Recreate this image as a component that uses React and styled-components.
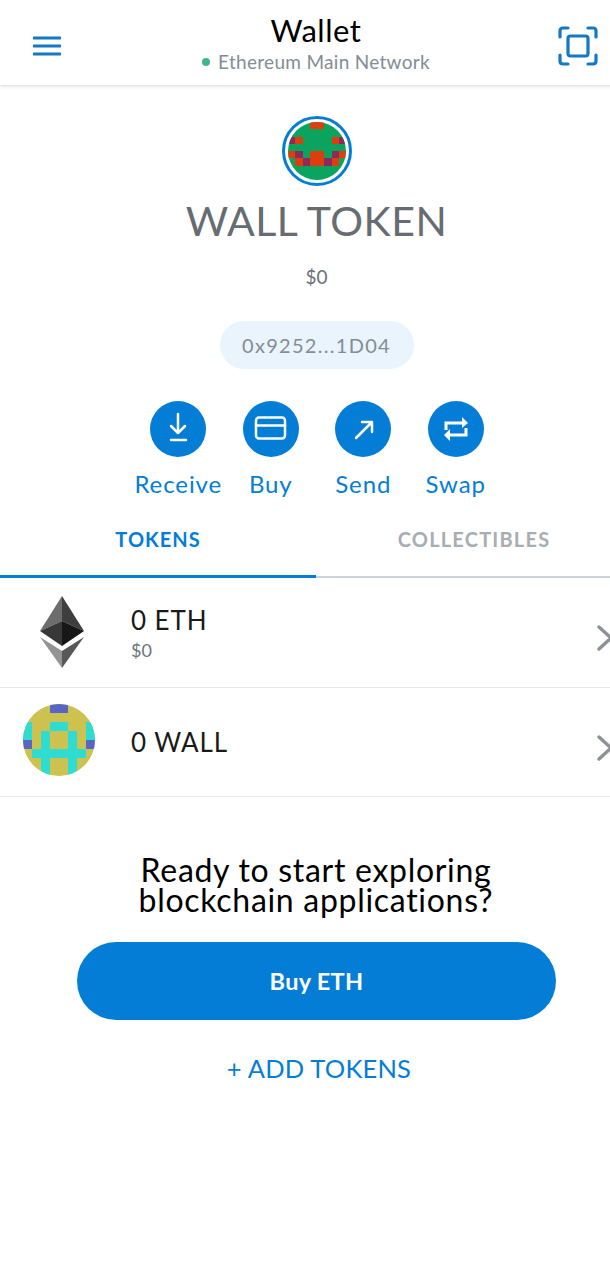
import React from "react";
import styled, { createGlobalStyle } from "styled-components";

const Global = createGlobalStyle`
  html, body { margin: 0; padding: 0; background: #fff; overflow: hidden; height: 1280px; }
  * { box-sizing: border-box; }
  body { font-family: "Lato", "Liberation Sans", sans-serif; }
`;

const Screen = styled.div`
  width: 632px;
  height: 1280px;
  display: flex;
  flex-direction: column;
  background: #fff;
`;

const Header = styled.header`
  height: 85px;
  flex: none;
  display: flex;
  align-items: center;
  justify-content: space-between;
  padding: 6px 34px 0 33px;
  box-shadow: 0 1px 4px rgba(0, 0, 0, 0.16);
`;

const IconButton = styled.div`
  display: flex;
  flex: none;
  width: ${(p) => p.$size}px;
  height: ${(p) => p.$size}px;
  margin-right: ${(p) => p.$mr || 0}px;
`;

const HeaderTitle = styled.div`
  flex: 1;
  display: flex;
  flex-direction: column;
  align-items: center;
  margin-bottom: 5px;
`;

const Title = styled.div`
  font-size: 31px;
  line-height: 36px;
  color: #000;
  letter-spacing: 0.5px;
`;

const Network = styled.div`
  display: flex;
  align-items: center;
  gap: 8px;
  font-size: 19px;
  line-height: 24px;
  margin-top: 2px;
  color: #848c96;
  letter-spacing: 0.3px;
`;

const Dot = styled.span`
  width: 8px;
  height: 8px;
  border-radius: 50%;
  background: #3fb58f;
`;

const Account = styled.section`
  display: flex;
  flex-direction: column;
  align-items: center;
  padding: 31px 0 0 1px;
`;

const AvatarRing = styled.div`
  width: 70px;
  height: 70px;
  border-radius: 50%;
  border: 3px solid #037dd6;
  padding: 3px;
  display: flex;
`;

const Identicon = styled.svg`
  display: block;
  width: ${(p) => p.$size}px;
  height: ${(p) => p.$size}px;
  border-radius: 50%;
  flex: none;
`;

const AccountName = styled.div`
  font-size: 41px;
  line-height: 50px;
  margin-top: 10px;
  color: #666c72;
  letter-spacing: 0.5px;
`;

const Fiat = styled.div`
  font-size: 19px;
  line-height: 24px;
  margin-top: 19px;
  color: #6a737d;
`;

const AddressPill = styled.div`
  margin-top: 32px;
  height: 48px;
  width: 194px;
  border-radius: 24px;
  background: #eaf4fc;
  display: flex;
  align-items: center;
  justify-content: center;
  font-size: 20px;
  letter-spacing: 1.3px;
  color: #848c96;
`;

const Actions = styled.div`
  margin-top: 32px;
  display: flex;
  justify-content: center;
  padding-left: 1px;
`;

const Action = styled.div`
  width: 92.5px;
  display: flex;
  flex-direction: column;
  align-items: center;
`;

const ActionCircle = styled.div`
  width: 56px;
  height: 56px;
  border-radius: 50%;
  background: #037dd6;
  display: flex;
`;

const ActionLabel = styled.div`
  margin-top: 12px;
  font-size: 24px;
  line-height: 29px;
  color: #037dd6;
  letter-spacing: 0.9px;
  white-space: nowrap;
`;

const Tabs = styled.div`
  display: flex;
  margin-top: 15px;
  height: 65px;
  border-bottom: 2px solid #cfd3d7;
`;

const Tab = styled.div`
  flex: 1;
  display: flex;
  align-items: center;
  justify-content: center;
  height: 65px;
  padding-bottom: 10px;
  font-size: 20px;
  font-weight: 700;
  letter-spacing: ${(p) => (p.$active ? "1px" : "1.2px")};
  color: ${(p) => (p.$active ? "#037dd6" : "#a8adb3")};
  border-bottom: 3px solid ${(p) => (p.$active ? "#037dd6" : "transparent")};
`;

const TokenRow = styled.div`
  height: ${(p) => p.$h}px;
  display: flex;
  align-items: center;
  border-bottom: 1px solid #e6e8ea;
  padding-right: 19px;
`;

const TokenIconCell = styled.div`
  width: 131px;
  flex: none;
  display: flex;
  padding-left: ${(p) => p.$pad}px;
  margin-bottom: ${(p) => p.$lift}px;
`;

const TokenText = styled.div`
  flex: 1;
  display: flex;
  flex-direction: column;
`;

const TokenAmount = styled.div`
  font-size: 26px;
  line-height: 32px;
  color: #1a1a1a;
  letter-spacing: 0.9px;
`;

const TokenFiat = styled.div`
  font-size: 18px;
  line-height: 22px;
  margin-top: 3px;
  color: #6a737d;
`;

const ChevronSlot = styled.div`
  display: flex;
  margin-top: 11px;
`;

const Footer = styled.section`
  display: flex;
  flex-direction: column;
  align-items: center;
  padding-top: 58px;
`;

const Prompt = styled.div`
  font-size: 32px;
  line-height: 30px;
  text-align: center;
  color: #000;
  letter-spacing: 0.7px;
`;

const BuyButton = styled.div`
  margin-top: 27px;
  margin-left: 1px;
  width: 479px;
  height: 78px;
  border-radius: 39px;
  background: #037dd6;
  color: #fff;
  font-size: 23.5px;
  font-weight: 700;
  display: flex;
  align-items: center;
  justify-content: center;
  letter-spacing: 0.3px;
`;

const AddTokens = styled.div`
  margin-top: 32px;
  padding-left: 6px;
  font-size: 25.5px;
  line-height: 32px;
  color: #037dd6;
  letter-spacing: 0.2px;
`;

const Cells = ({ cells, fill }) =>
  cells.map(([x, y, w = 1, h = 1], i) => (
    <rect key={i} x={x} y={y} width={w} height={h} fill={fill} />
  ));

const Menu = () => (
  <svg width="28" height="28" viewBox="0 0 28 28">
    <path d="M1 6h26M1 14h26M1 22h26" stroke="#1279c4" strokeWidth="3.2" fill="none" strokeLinecap="round" />
  </svg>
);

const Scan = () => (
  <svg width="40" height="40" viewBox="0 0 40 40" fill="none" stroke="#1279c4" strokeWidth="3.2" strokeLinecap="round">
    <path d="M2 11V5q0-3 3-3h5M30 2h5q3 0 3 3v6M38 29v6q0 3-3 3h-5M10 38H5q-3 0-3-3v-6" />
    <rect x="10" y="10" width="20" height="20" rx="2.5" />
  </svg>
);

const WallAvatar = () => (
  <Identicon $size={58} viewBox="0 0 8 8" shapeRendering="crispEdges">
    <rect width="8" height="8" fill="#0aa45f" />
    <Cells fill="#dd3f0c" cells={[[3, 0, 2], [1, 2], [6, 2], [0, 4], [7, 4], [3, 4, 2, 2], [1, 5], [6, 5]]} />
    <Cells fill="#8b2b5c" cells={[[0, 2], [7, 2], [1, 4], [6, 4], [2, 5], [5, 5]]} />
  </Identicon>
);

const TokenAvatar = () => (
  <Identicon $size={72} viewBox="0 0 8 8" shapeRendering="crispEdges">
    <rect width="8" height="8" fill="#cdc14f" />
    <Cells fill="#2fdcd2" cells={[[3, 2, 2], [2, 3, 1, 5], [5, 3, 1, 5], [1, 5, 6], [0, 2, 1, 2], [7, 2, 1, 2]]} />
    <Cells fill="#5566c4" cells={[[3, 0, 2], [0, 4], [7, 4]]} />
  </Identicon>
);

const EthLogo = () => (
  <svg width="44" height="72" viewBox="0 0 44 72">
    <polygon points="22,0 22,25 0,35" fill="#6d6d6d" />
    <polygon points="22,0 44,35 22,25" fill="#3e3e3e" />
    <polygon points="0,35 22,25 22,50" fill="#383838" />
    <polygon points="44,35 22,25 22,50" fill="#171717" />
    <polygon points="0,41 22,55 22,72" fill="#949494" />
    <polygon points="44,41 22,55 22,72" fill="#585858" />
  </svg>
);

const Chevron = () => (
  <svg width="16" height="26" viewBox="0 0 16 26" fill="none" stroke="#8e9297" strokeWidth="3.4" strokeLinecap="round" strokeLinejoin="round">
    <path d="M2 2l12 11L2 24" />
  </svg>
);

const glyph = { fill: "none", stroke: "#fff", strokeWidth: 2.5, strokeLinecap: "round", strokeLinejoin: "round" };

const ActionIcons = {
  receive: (
    <g {...glyph}>
      <path d="M28 13v18M21 25l7 7 7-7M21 39h15" />
    </g>
  ),
  buy: (
    <g {...glyph}>
      <rect x="13" y="16.5" width="29" height="21" rx="3" />
      <path d="M13 24.5h29" />
    </g>
  ),
  send: (
    <g {...glyph}>
      <path d="M21 37l16-16M27 21h10v10" />
    </g>
  ),
  swap: (
    <g>
      <path d="M18 29v-7h18M38 27v7H20" fill="none" stroke="#fff" strokeWidth="3" />
      <path d="M34 16l6 6-6 5zM22 28l-6 6 6 6z" fill="#fff" />
    </g>
  ),
};

const actions = [
  ["receive", "Receive"],
  ["buy", "Buy"],
  ["send", "Send"],
  ["swap", "Swap"],
];

export default function App() {
  return (
    <Screen>
      <Global />
      <Header>
        <IconButton $size={28} $mr={13}><Menu /></IconButton>
        <HeaderTitle>
          <Title>Wallet</Title>
          <Network><Dot />Ethereum Main Network</Network>
        </HeaderTitle>
        <IconButton $size={40}><Scan /></IconButton>
      </Header>
      <Account>
        <AvatarRing><WallAvatar /></AvatarRing>
        <AccountName>WALL TOKEN</AccountName>
        <Fiat>$0</Fiat>
        <AddressPill>0x9252...1D04</AddressPill>
        <Actions>
          {actions.map(([key, label]) => (
            <Action key={key}>
              <ActionCircle>
                <svg width="56" height="56" viewBox="0 0 56 56">{ActionIcons[key]}</svg>
              </ActionCircle>
              <ActionLabel>{label}</ActionLabel>
            </Action>
          ))}
        </Actions>
      </Account>
      <Tabs>
        <Tab $active>TOKENS</Tab>
        <Tab>COLLECTIBLES</Tab>
      </Tabs>
      <TokenRow $h={110}>
        <TokenIconCell $pad={40} $lift={2}><EthLogo /></TokenIconCell>
        <TokenText>
          <TokenAmount>0 ETH</TokenAmount>
          <TokenFiat>$0</TokenFiat>
        </TokenText>
        <ChevronSlot><Chevron /></ChevronSlot>
      </TokenRow>
      <TokenRow $h={109}>
        <TokenIconCell $pad={23} $lift={5}><TokenAvatar /></TokenIconCell>
        <TokenText>
          <TokenAmount>0 WALL</TokenAmount>
        </TokenText>
        <ChevronSlot><Chevron /></ChevronSlot>
      </TokenRow>
      <Footer>
        <Prompt>Ready to start exploring<br />blockchain applications?</Prompt>
        <BuyButton>Buy ETH</BuyButton>
        <AddTokens>+ ADD TOKENS</AddTokens>
      </Footer>
    </Screen>
  );
}
